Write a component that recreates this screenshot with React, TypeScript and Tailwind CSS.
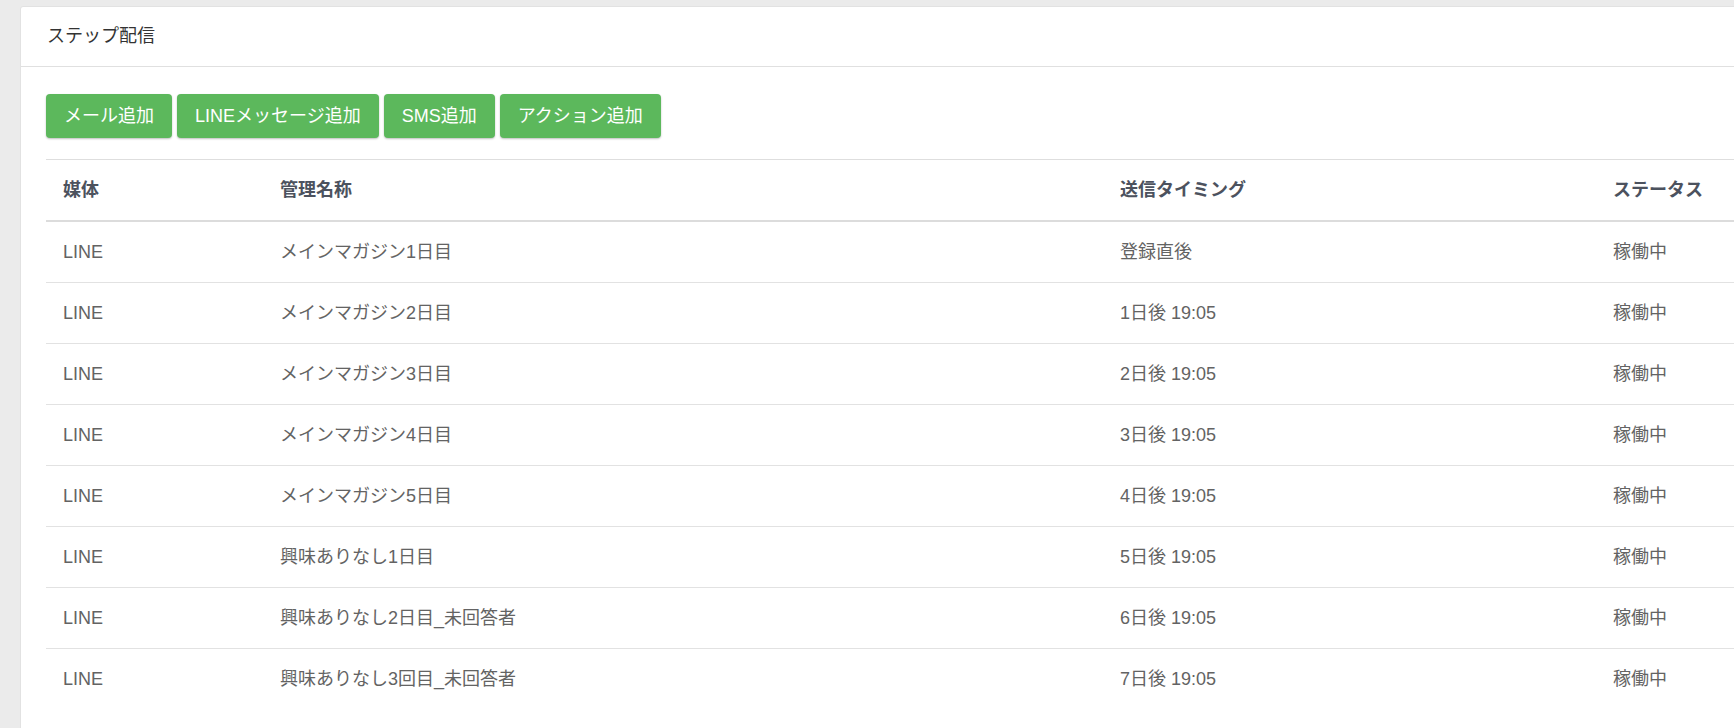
import React from 'react';

const rows = [
  { media: 'LINE', name: 'メインマガジン1日目', timing: '登録直後', status: '稼働中' },
  { media: 'LINE', name: 'メインマガジン2日目', timing: '1日後 19:05', status: '稼働中' },
  { media: 'LINE', name: 'メインマガジン3日目', timing: '2日後 19:05', status: '稼働中' },
  { media: 'LINE', name: 'メインマガジン4日目', timing: '3日後 19:05', status: '稼働中' },
  { media: 'LINE', name: 'メインマガジン5日目', timing: '4日後 19:05', status: '稼働中' },
  { media: 'LINE', name: '興味ありなし1日目', timing: '5日後 19:05', status: '稼働中' },
  { media: 'LINE', name: '興味ありなし2日目_未回答者', timing: '6日後 19:05', status: '稼働中' },
  { media: 'LINE', name: '興味ありなし3回目_未回答者', timing: '7日後 19:05', status: '稼働中' },
];

const buttons = ['メール追加', 'LINEメッセージ追加', 'SMS追加', 'アクション追加'];

export default function App() {
  return (
    <div
      className="h-[728px] w-[1734px] overflow-hidden bg-[#ebebeb] pt-[6px] pl-[20px]"
      style={{ fontFamily: '"Liberation Sans", "Noto Sans CJK JP", sans-serif' }}
    >
      <div className="w-[1760px] h-[760px] bg-white rounded-[3px] border border-[#e2e2e2]">
        {/* card header */}
        <div className="h-[60px] flex items-center px-[26px] border-b border-[#e0e0e0] text-[18px] text-[#333]">
          ステップ配信
        </div>

        <div className="px-[25px] pt-[27px]">
          <div className="flex gap-[5px]">
            {buttons.map((b) => (
              <button
                key={b}
                className="h-[44px] px-[18px] rounded-[4px] bg-[#5cb85c] text-white text-[18px] shadow-[0_1px_2px_rgba(0,0,0,0.25)]"
              >
                {b}
              </button>
            ))}
          </div>

          {/* table */}
          <div className="mt-[21px] border-t border-[#dedede] text-[18px]">
            <div className="grid grid-cols-[217px_840px_493px_1fr] h-[62px] items-center border-b-2 border-[#dcdcdc] font-bold text-[#4c525e]">
              <div className="px-[17px]">媒体</div>
              <div className="px-[17px]">管理名称</div>
              <div className="px-[17px]">送信タイミング</div>
              <div className="px-[17px]">ステータス</div>
            </div>
            {rows.map((r, i) => (
              <div
                key={i}
                className={
                  i < rows.length - 1
                    ? 'grid grid-cols-[217px_840px_493px_1fr] h-[61px] items-center border-b border-[#e2e2e2] text-[#636363]'
                    : 'grid grid-cols-[217px_840px_493px_1fr] h-[61px] items-center text-[#636363]'
                }
              >
                <div className="px-[17px]">{r.media}</div>
                <div className="px-[17px]">{r.name}</div>
                <div className="px-[17px]">{r.timing}</div>
                <div className="px-[17px]">{r.status}</div>
              </div>
            ))}
          </div>
        </div>
      </div>
    </div>
  );
}
